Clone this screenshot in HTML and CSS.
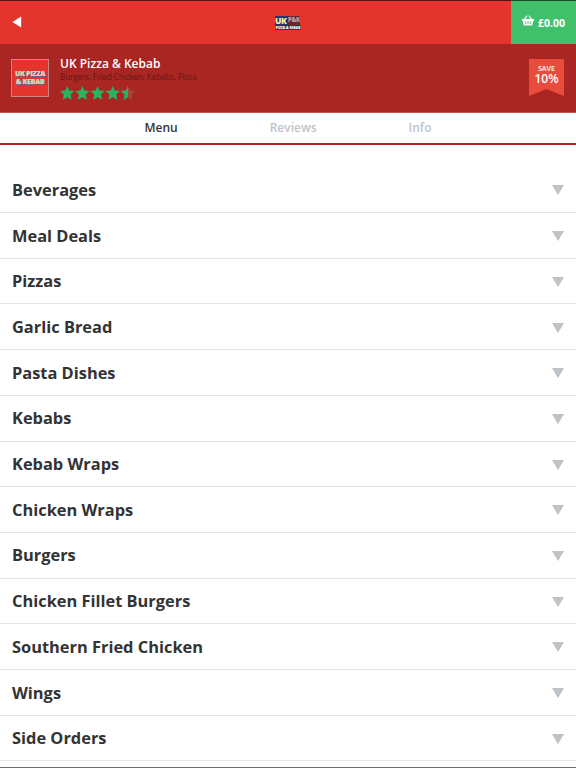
FILE: index.html
```html
<!DOCTYPE html>
<html lang="en">
<head>
  <meta charset="UTF-8" />
  <meta name="viewport" content="width=device-width, initial-scale=1.0"/>
  <title>UK Pizza &amp; Kebab</title>
  <link rel="stylesheet" href="styles.css">
</head>
<body>

  <header class="topbar">
    <a href="#" class="back" aria-label="Back">
      <svg width="10" height="12" viewBox="0 0 10 12"><path d="M9.2 0.6v10.8L0.4 6z" fill="#fff"/></svg>
    </a>
    <div class="brand">
      <div class="brand-top"><span class="brand-uk">UK</span><span class="brand-pk">P&amp;K</span></div>
      <div class="brand-sub">PIZZA &amp; KEBAB</div>
    </div>
    <a href="#" class="basket">
      <svg width="12" height="12" viewBox="0 0 12 12">
        <path d="M2.200 5L5 .6M9.800 5L7 .6" stroke="#fff" stroke-width="1.200" fill="none"/>
        <path d="M0 4h12v1.900h-.8L10.200 10.600H1.800L.8 5.900H0z" fill="#fff"/>
        <path d="M3.700 6.300v3M6 6.300v3M8.300 6.300v3" stroke="#41c06c" stroke-width=".9"/>
      </svg>
      <span>£0.00</span>
    </a>
  </header>

  <section class="restaurant">
    <div class="logo">
      <span class="logo-text">UK PIZZA</span>
      <span class="logo-text">&amp; KEBAB</span>
    </div>
    <div class="details">
      <h1>UK Pizza &amp; Kebab</h1>
      <p>Burgers, Fried Chicken, Kebabs, Pizza</p>
      <svg class="stars" width="76" height="14" viewBox="0 0 76 14">
        <defs>
          <path id="star" d="M7.200 0l2 4.500 5.200.6-3.800 3.500 1 5.100-4.400-2.500-4.400 2.500 1-5.100L0 5.100l5.200-.6z"/>
          <clipPath id="half"><rect width="7.200" height="14"/></clipPath>
        </defs>
        <g fill="#27b35f">
          <use href="#star"/>
          <use href="#star" x="15.200"/>
          <use href="#star" x="30.400"/>
          <use href="#star" x="45.600"/>
          <g transform="translate(60.800 0)">
            <use href="#star" fill="#a04a3c"/>
            <use href="#star" clip-path="url(#half)"/>
          </g>
        </g>
      </svg>
    </div>
    <div class="save">
      <span class="save-label">SAVE</span>
      <span class="save-value">10%</span>
    </div>
  </section>

  <nav class="tabs">
    <a href="#" class="active">Menu</a>
    <a href="#">Reviews</a>
    <a href="#">Info</a>
  </nav>

  <ul class="menu">
    <li>Beverages</li>
    <li>Meal Deals</li>
    <li>Pizzas</li>
    <li>Garlic Bread</li>
    <li>Pasta Dishes</li>
    <li>Kebabs</li>
    <li>Kebab Wraps</li>
    <li>Chicken Wraps</li>
    <li>Burgers</li>
    <li>Chicken Fillet Burgers</li>
    <li>Southern Fried Chicken</li>
    <li>Wings</li>
    <li>Side Orders</li>
  </ul>

</body>
</html>
```
FILE: styles.css
```css
* {
  box-sizing: border-box;
}
body {
  margin: 0;
  height: 768px;
  overflow: hidden;
  font-family: "Open Sans", sans-serif;
  background: #fff;
  color: #333;
  border-bottom: 1px solid #6c6c6c;
}
a {
  text-decoration: none;
}
.topbar {
  display: grid;
  grid-template-columns: 65px 1fr 65px;
  height: 44px;
  background: #e3352e;
  box-shadow: inset 0 1px 0 rgba(0,0,0,0.6);
}
.back {
  display: flex;
  align-items: center;
  padding: 0 0 0 12px;
}
.brand {
  align-self: center;
  justify-self: center;
  width: 26px;
  margin-top: 2px;
  color: #fff;
  font-weight: 800;
}
.brand-top {
  display: flex;
  height: 9px;
  line-height: 9px;
}
.brand-uk {
  width: 13px;
  font-size: 8.5px;
  letter-spacing: -0.5px;
  background: #27336d;
  color: #f5eda0;
}
.brand-pk {
  width: 12px;
  font-size: 6px;
  letter-spacing: -0.3px;
  background: #6b2734;
  color: #b9a09b;
}
.brand-sub {
  height: 5px;
  background: #27336d;
  font-size: 3.3px;
  line-height: 5px;
  text-align: center;
  white-space: nowrap;
}
.basket {
  display: flex;
  align-items: center;
  gap: 4px;
  padding: 1px 0 0 11px;
  background: #41c06c;
  box-shadow: inset 0 1px 0 rgba(0,0,0,0.6);
  color: #fff;
  font-size: 10.5px;
  font-weight: 700;
}
.basket svg {
  margin-top: -3px;
}
.restaurant {
  display: flex;
  height: 69px;
  padding: 15px 12px 0 11px;
  background: #a92622;
  border-bottom: 1px solid #bf5853;
}
.logo {
  display: flex;
  flex-direction: column;
  justify-content: center;
  width: 38px;
  height: 38px;
  border: 1px solid #c98683;
  background: #e3352e;
  text-align: center;
}
.logo-text {
  color: #efd9a0;
  font-size: 7px;
  font-weight: 800;
  line-height: 8px;
  letter-spacing: -0.3px;
  white-space: nowrap;
  text-shadow: 0 1px 0 #52709c, 1px 0 0 #6d7f91;
}
.details {
  flex: 1;
  margin: -4px 0 0 11px;
}
h1 {
  margin: 0;
  color: #fff;
  font-size: 12px;
  font-weight: 600;
  line-height: 17px;
}
.details p {
  margin: 0;
  color: #681713;
  font-size: 8.2px;
  letter-spacing: -0.13px;
  line-height: 10px;
}
.stars {
  display: block;
  margin-top: 4px;
}
.save {
  display: flex;
  flex-direction: column;
  align-items: center;
  width: 35px;
  height: 37px;
  padding-top: 5px;
  background: #e74c3c;
  clip-path: polygon(0 0, 100% 0, 100% 100%, 50% 81%, 0 100%);
  color: #fff;
  font-weight: 600;
}
.save-label {
  font-size: 7.2px;
  line-height: 9px;
}
.save-value {
  font-size: 12px;
  line-height: 11px;
}
.tabs {
  display: flex;
  justify-content: center;
  gap: 92px;
  height: 32px;
  border-bottom: 2px solid #a92622;
}
.tabs a {
  color: #bdc3c7;
  font-size: 12px;
  font-weight: 600;
  line-height: 29px;
}
.tabs a.active {
  color: #333;
}
.menu {
  margin: 0;
  padding: 22.4px 0 0;
  list-style: none;
}
.menu li {
  display: flex;
  align-items: center;
  justify-content: space-between;
  height: 45.7px;
  padding: 0 12px 0.6px;
  border-bottom: 1px solid #e5e5e5;
  font-size: 16.4px;
  font-weight: 700;
}
.menu li::after {
  content: "";
  margin-top: 2px;
  border: solid transparent;
  border-width: 10px 6px 0;
  border-top-color: #bdc3c7;
}
```
